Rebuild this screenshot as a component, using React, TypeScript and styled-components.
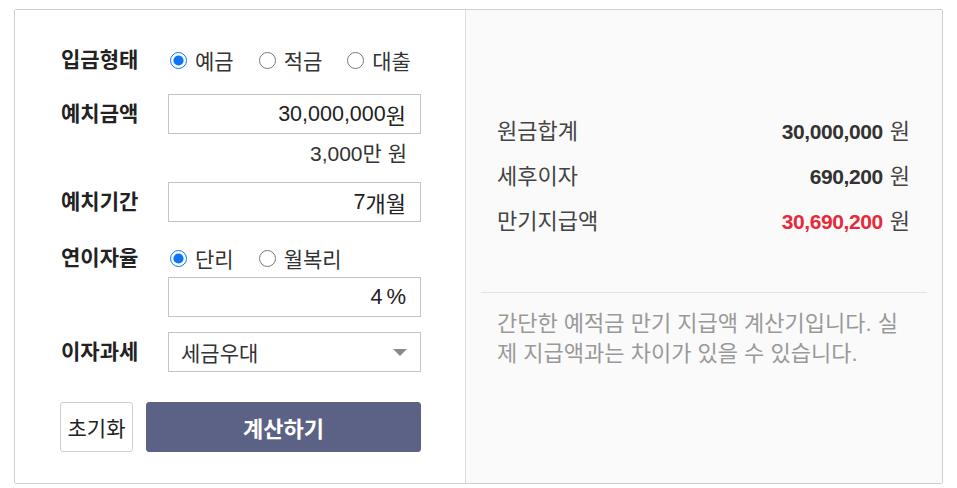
import styled, { createGlobalStyle } from "styled-components";

const GlobalStyle = createGlobalStyle`
  body {
    margin: 0;
    background: #ffffff;
    font-family: "Liberation Sans", "Noto Sans CJK KR", sans-serif;
    color: #222;
  }
`;

const Page = styled.div`
  padding: 9px 14px 0 14px;
`;

const Card = styled.div`
  width: 929px;
  height: 475px;
  box-sizing: border-box;
  border: 1px solid #cfcfcf;
  border-radius: 2px;
  display: grid;
  grid-template-columns: 450px 1fr;
`;

const FormPanel = styled.div`
  padding: 35px 44px 0 46px;
  display: flex;
  flex-direction: column;
  background: #fff;
`;

const Row = styled.div<{ $mt?: number }>`
  display: grid;
  grid-template-columns: 107px 1fr;
  align-items: start;
  margin-top: ${(p) => p.$mt ?? 0}px;
`;

const Label = styled.div<{ $h: number }>`
  font-size: 21px;
  font-weight: 700;
  color: #222;
  line-height: ${(p) => p.$h}px;
  height: ${(p) => p.$h}px;
`;

const Field = styled.div`
  display: flex;
  flex-direction: column;
`;

const RadioGroup = styled.div`
  display: flex;
  align-items: center;
  height: 30px;
  gap: 23px;
`;

const RadioLabel = styled.label`
  display: flex;
  align-items: center;
  gap: 8px;
  font-size: 21px;
  color: #333;
  cursor: pointer;
`;

const Radio = styled.input.attrs({ type: "radio" })`
  width: 17px;
  height: 17px;
  margin: 0 0 0 2px;
  accent-color: #0b75f5;
`;

const TextBox = styled.div<{ $mt?: number }>`
  height: 40px;
  box-sizing: border-box;
  border: 1px solid #c4c4c4;
  margin-top: ${(p) => p.$mt ?? 0}px;
  padding: 0 14px;
  display: flex;
  align-items: center;
  justify-content: flex-end;
  font-size: 21.5px;
  color: #222;
`;

const Unit = styled.span<{ $gap?: number }>`
  font-size: 22px;
  margin-left: ${(p) => p.$gap ?? 0}px;
`;

const Hint = styled.div`
  text-align: right;
  font-size: 21px;
  line-height: 24px;
  color: #333;
  margin: 8px 14px 0 0;
`;

const SelectBox = styled.div`
  height: 40px;
  box-sizing: border-box;
  border: 1px solid #c4c4c4;
  padding: 0 12px 0 12px;
  display: flex;
  align-items: center;
  justify-content: space-between;
  font-size: 21px;
  color: #333;
`;

const Caret = styled.span`
  width: 0;
  height: 0;
  border-left: 7px solid transparent;
  border-right: 7px solid transparent;
  border-top: 7px solid #8a8a8a;
  margin-right: 1px;
`;

const Actions = styled.div`
  display: grid;
  grid-template-columns: 73px 1fr;
  gap: 13px;
  margin-top: 30px;
  margin-left: -1px;
`;

const Button = styled.button<{ $primary?: boolean }>`
  height: 50px;
  border-radius: 3px;
  font-family: inherit;
  font-size: ${(p) => (p.$primary ? 22 : 21)}px;
  padding: 0;
  cursor: pointer;
  border: 1px solid ${(p) => (p.$primary ? "#5c6286" : "#cfcfcf")};
  background: ${(p) => (p.$primary ? "#5c6286" : "#fff")};
  color: ${(p) => (p.$primary ? "#fff" : "#222")};
  font-weight: ${(p) => (p.$primary ? 700 : 400)};
`;

const ResultPanel = styled.div`
  background: #fafafa;
  border-left: 1px solid #dedede;
  padding: 107px 15px 0 15px;
  display: flex;
  flex-direction: column;
`;

const Results = styled.div`
  display: flex;
  flex-direction: column;
  gap: 15px;
  padding: 0 17px 0 16px;
`;

const ResultRow = styled.div`
  display: flex;
  justify-content: space-between;
  align-items: center;
  line-height: 30px;
  font-size: 22px;
`;

const ResultLabel = styled.span`
  color: #444;
`;

const Amount = styled.span<{ $red?: boolean }>`
  font-size: 21px;
  letter-spacing: -0.4px;
  font-weight: 700;
  color: ${(p) => (p.$red ? "#e52a3a" : "#333")};
`;

const Won = styled.span`
  color: #444;
  margin-left: 7px;
`;

const Divider = styled.hr`
  border: 0;
  border-top: 1px solid #e3e3e3;
  margin: 55px 0 0 0;
`;

const Note = styled.p`
  margin: 16px 0 0 0;
  padding: 0 16px;
  font-size: 22px;
  line-height: 30px;
  color: #999;
  width: 412px;
`;

const results = [
  { label: "원금합계", value: "30,000,000" },
  { label: "세후이자", value: "690,200" },
  { label: "만기지급액", value: "30,690,200", red: true },
];

export default function App() {
  return (
    <Page>
      <GlobalStyle />
      <Card>
        <FormPanel>
          <Row>
            <Label $h={30}>입금형태</Label>
            <RadioGroup>
              <RadioLabel>
                <Radio name="kind" defaultChecked />
                예금
              </RadioLabel>
              <RadioLabel>
                <Radio name="kind" />
                적금
              </RadioLabel>
              <RadioLabel>
                <Radio name="kind" />
                대출
              </RadioLabel>
            </RadioGroup>
          </Row>

          <Row $mt={19}>
            <Label $h={40}>예치금액</Label>
            <Field>
              <TextBox>
                30,000,000<Unit>원</Unit>
              </TextBox>
              <Hint>3,000만 원</Hint>
            </Field>
          </Row>

          <Row $mt={16}>
            <Label $h={40}>예치기간</Label>
            <TextBox>
              7<Unit>개월</Unit>
            </TextBox>
          </Row>

          <Row $mt={21}>
            <Label $h={30}>연이자율</Label>
            <Field>
              <RadioGroup>
                <RadioLabel>
                  <Radio name="rate" defaultChecked />
                  단리
                </RadioLabel>
                <RadioLabel>
                  <Radio name="rate" />
                  월복리
                </RadioLabel>
              </RadioGroup>
              <TextBox $mt={4}>
                4<Unit $gap={4}>%</Unit>
              </TextBox>
            </Field>
          </Row>

          <Row $mt={15}>
            <Label $h={40}>이자과세</Label>
            <SelectBox>
              세금우대
              <Caret />
            </SelectBox>
          </Row>

          <Actions>
            <Button>초기화</Button>
            <Button $primary>계산하기</Button>
          </Actions>
        </FormPanel>

        <ResultPanel>
          <Results>
            {results.map((r) => (
              <ResultRow key={r.label}>
                <ResultLabel>{r.label}</ResultLabel>
                <span>
                  <Amount $red={r.red}>{r.value}</Amount>
                  <Won>원</Won>
                </span>
              </ResultRow>
            ))}
          </Results>
          <Divider />
          <Note>
            간단한 예적금 만기 지급액 계산기입니다. 실제 지급액과는 차이가 있을 수
            있습니다.
          </Note>
        </ResultPanel>
      </Card>
    </Page>
  );
}
